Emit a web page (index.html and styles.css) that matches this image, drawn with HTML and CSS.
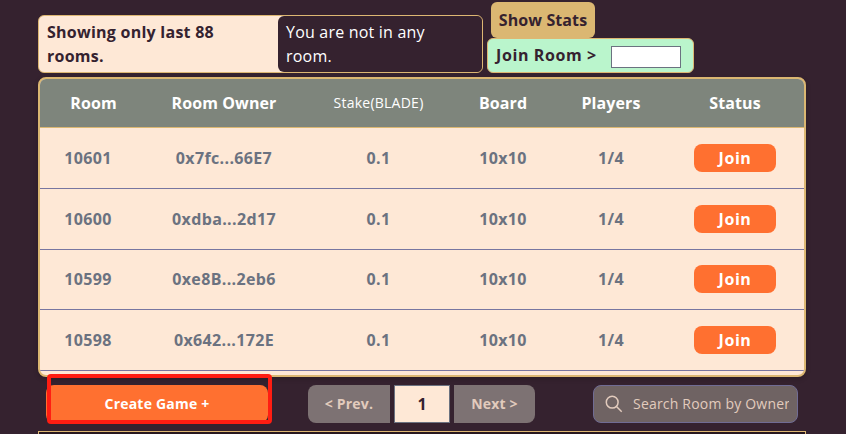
FILE: index.html
```html
<!DOCTYPE html>
<html lang="en">
<head>
<meta charset="utf-8">
<title>Rooms</title>
<link rel="stylesheet" href="styles.css">
</head>
<body>
<main class="page">
  <div class="top">
    <div class="notice">
      <p class="notice-count">Showing only last 88<br>rooms.</p>
      <p class="notice-room">You are not in any<br>room.</p>
    </div>
    <div class="actions">
      <button class="stats">Show Stats</button>
      <label class="join-room"><span>Join Room &gt;</span><input class="room-input" type="text"></label>
    </div>
  </div>

  <section class="table">
    <div class="row head"><span>Room</span><span>Room Owner</span><span class="stake">Stake(BLADE)</span><span>Board</span><span>Players</span><span>Status</span></div>
    <div class="row"><span class="id">10601</span><span>0x7fc...66E7</span><span>0.1</span><span>10x10</span><span>1/4</span><button class="join">Join</button></div>
    <div class="row"><span class="id">10600</span><span>0xdba...2d17</span><span>0.1</span><span>10x10</span><span>1/4</span><button class="join">Join</button></div>
    <div class="row"><span class="id">10599</span><span>0xe8B...2eb6</span><span>0.1</span><span>10x10</span><span>1/4</span><button class="join">Join</button></div>
    <div class="row"><span class="id">10598</span><span>0x642...172E</span><span>0.1</span><span>10x10</span><span>1/4</span><button class="join">Join</button></div>
  </section>

  <div class="controls">
    <div class="create-wrap"><button class="create">Create Game +</button><i class="highlight"></i></div>
    <div class="pager">
      <button class="prev">&lt; Prev.</button>
      <span class="current">1</span>
      <button class="next">Next &gt;</button>
    </div>
    <div class="search">
      <svg class="search-icon" viewBox="0 0 18 18"><circle cx="7.2" cy="7.2" r="5.9"/><path d="M11.5 11.5L16.7 16.7"/></svg>
      <span class="search-text">Search Room by Owner</span>
    </div>
  </div>
  <div class="panel"></div>
</main>
</body>
</html>
```
FILE: styles.css
```css
* { box-sizing: border-box; }
body {
  margin: 0;
  height: 434px;
  overflow: hidden;
  background: #35222f;
  color: #35222f;
  font: 700 16px/24px "Open Sans", "Noto Sans", sans-serif;
}
button {
  border: 0;
  padding: 0;
  font: inherit;
  color: inherit;
}
p { margin: 0; }
.page { width: 768px; margin-left: 38px; }
.top {
  display: flex;
  align-items: flex-end;
  gap: 4px;
  height: 73px;
}
.notice {
  display: flex;
  width: 445px;
  height: 58px;
  border: 1px solid #ddb773;
  border-radius: 6px;
  background: linear-gradient(90deg, #fee8d6 245px, #35222f 245px);
}
.notice p { padding: 4px 8px; white-space: nowrap; }
.notice .notice-count { width: 239px; letter-spacing: .25px; }
.notice-room {
  flex: 1;
  border-radius: 6px;
  background: #35222f;
  color: #fff;
  font-weight: 400;
  letter-spacing: .2px;
}
.actions { display: flex; flex-direction: column; }
.stats {
  width: 104px;
  height: 36px;
  margin-left: 4px;
  border-radius: 6px;
  background: #dbb772;
  letter-spacing: .1px;
}
.join-room {
  display: flex;
  justify-content: space-between;
  width: 207px;
  height: 35px;
  padding: 4px 12px 4px 8px;
  border: 1px solid #ddb773;
  border-radius: 6px;
  background: #baf5cc;
  letter-spacing: .6px;
}
.room-input {
  width: 70px;
  height: 22px;
  margin-top: 3px;
  border: 1px solid #6b7280;
  background: #fff;
}
.table {
  height: 300px;
  margin-top: 4px;
  border: 2px solid #dbb772;
  border-radius: 8px;
  background: #fee8d6;
  overflow: hidden;
  box-shadow: 0 2px 5px #0003;
}
.row {
  display: grid;
  grid-template-columns: 107px 154px 155px 94px 122px 126px;
  align-items: center;
  justify-items: center;
  height: 61px;
  border-bottom: 1px solid #7876a0;
  color: #6b7280;
  letter-spacing: .35px;
}
.row:nth-child(4) { height: 60px; padding-bottom: 1px; }
.head {
  height: 49px;
  border-color: #dbb772;
  background: #7e857c;
  color: #fff;
  letter-spacing: .1px;
}
.stake { font-size: 14px; font-weight: 400; letter-spacing: .25px; }
.id { margin-right: 11px; }
.join {
  width: 82px;
  height: 28px;
  border-radius: 8px;
  background: #ff7030;
  color: #fff;
  letter-spacing: .6px;
}
.controls {
  display: flex;
  height: 38px;
  margin: 8px 8px 8px;
  font-size: 14px;
}
.create-wrap { position: relative; width: 222px; }
.create {
  width: 222px;
  height: 38px;
  border-radius: 8px;
  background: #ff7030;
  color: #fff;
  letter-spacing: .2px;
}
.highlight {
  position: absolute;
  left: 1px;
  top: -11px;
  width: 225px;
  height: 50px;
  border: 4px solid #ff1d12;
  border-radius: 4px;
}
.pager { display: flex; gap: 4px; margin-left: 40px; }
.prev, .next {
  width: 82px;
  background: #7d7273;
  color: #e2cbbd;
  letter-spacing: .2px;
}
.prev { border-radius: 8px 0 0 8px; }
.next { width: 81px; border-radius: 0 8px 8px 0; }
.current {
  width: 56px;
  border: 1px solid #6b7280;
  background: #fee8d6;
  text-align: center;
  font-size: 16px;
  line-height: 36px;
}
.search {
  display: flex;
  align-items: center;
  width: 205px;
  margin: 0 0 0 58px;
  padding: 0 8px 0 11px;
  border: 1px solid #706c94;
  border-radius: 8px;
  background: #6f6363;
  color: #e2cbbd;
  font-weight: 400;
}
.search-icon {
  flex: none;
  width: 18px;
  height: 18px;
  margin-right: 10px;
  fill: none;
  stroke: #e2cbbd;
  stroke-width: 1.5;
}
.search-text { overflow: hidden; white-space: nowrap; letter-spacing: .2px; }
.panel {
  height: 20px;
  border: 1px solid #ddb773;
  background: #28171f;
}
```
